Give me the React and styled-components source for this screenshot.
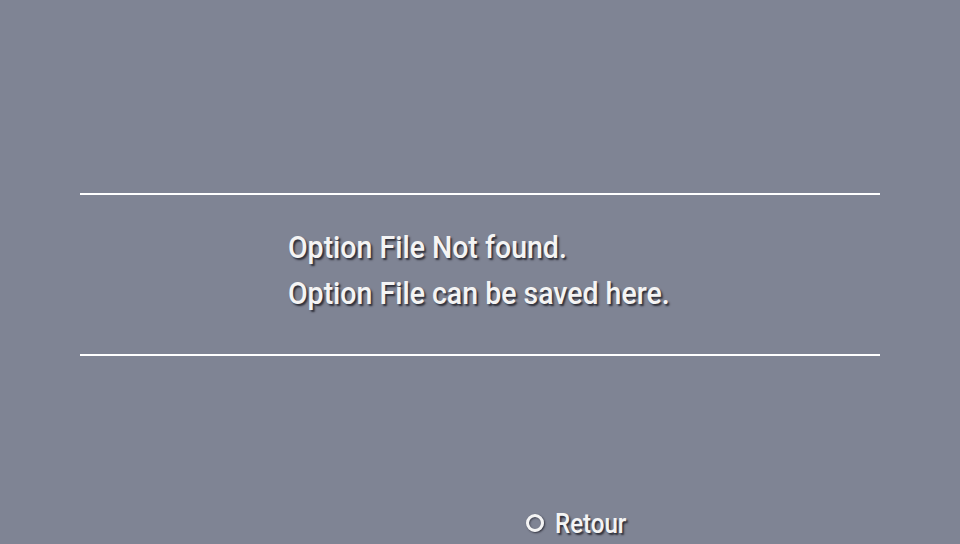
import React from 'react';
import styled, { createGlobalStyle } from 'styled-components';

const Global = createGlobalStyle`
  html, body { margin: 0; padding: 0; }
  body { background: #7f8494; font-family: Roboto, "Liberation Sans", sans-serif; }
`;

const Screen = styled.div`
  width: 960px;
  height: 544px;
  background: #7f8494;
  display: flex;
  flex-direction: column;
  overflow: hidden;
`;

const Panel = styled.div`
  margin: 193px 80px 0;
  height: 163px;
  border-top: 2px solid #ffffff;
  border-bottom: 2px solid #ffffff;
  padding: 32px 0 0 208px;
  box-sizing: border-box;
  display: flex;
  flex-direction: column;
  gap: 6px;
`;

const Line = styled.div`
  color: #f4f4f4;
  font-size: 32px;
  font-weight: 500;
  line-height: 40px;
  white-space: nowrap;
  transform: scaleX(0.89);
  transform-origin: left center;
  text-shadow: 2px 2px 2px rgba(30, 30, 40, 0.85);
`;

const Footer = styled.div`
  margin-top: auto;
  height: 42px;
  display: flex;
  align-items: center;
  padding-left: 526px;
  gap: 11px;
`;

const Ring = styled.span`
  width: 12px;
  height: 12px;
  border: 3px solid #f4f4f4;
  border-radius: 50%;
  box-shadow: 1px 1px 2px rgba(30, 30, 40, 0.8), inset 1px 1px 2px rgba(30, 30, 40, 0.6);
`;

const Label = styled.span`
  color: #f4f4f4;
  font-size: 28px;
  font-weight: 500;
  transform: scaleX(0.86);
  transform-origin: left center;
  text-shadow: 2px 2px 2px rgba(30, 30, 40, 0.85);
`;

export default function App() {
  return (
    <>
      <Global />
      <Screen>
        <Panel>
          <Line>Option File Not found.</Line>
          <Line>Option File can be saved here.</Line>
        </Panel>
        <Footer>
          <Ring />
          <Label>Retour</Label>
        </Footer>
      </Screen>
    </>
  );
}
